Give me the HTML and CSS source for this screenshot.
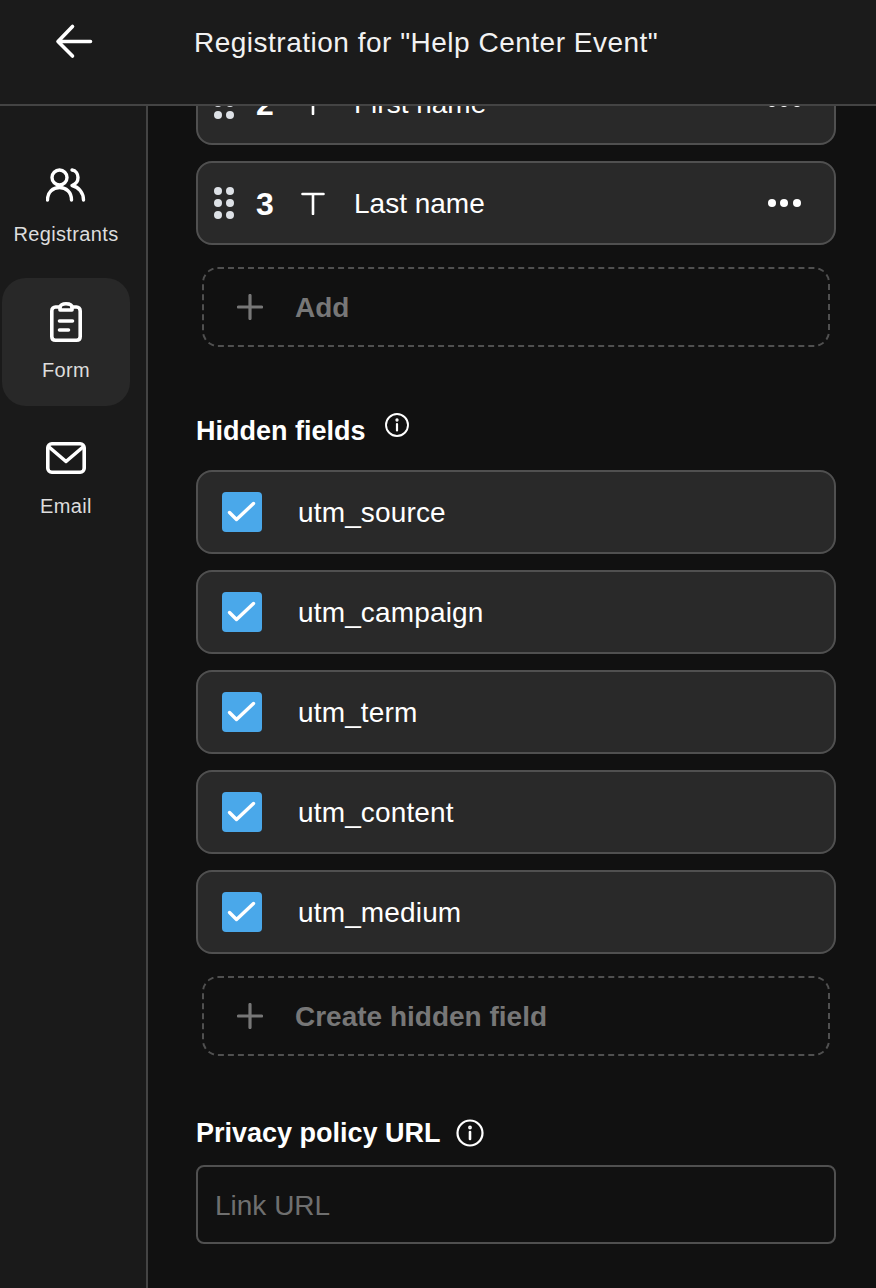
FILE: index.html
```html
<!DOCTYPE html>
<html lang="en">
<head>
<meta charset="utf-8">
<title>Registration</title>
<link rel="stylesheet" href="styles.css">
</head>
<body>
<div class="app">
  <header class="topbar">
    <button class="back" aria-label="Back">
      <svg width="40" height="40" viewBox="0 0 40 40" fill="none" stroke="#fff" stroke-width="3.600" stroke-linecap="round" stroke-linejoin="round"><path d="M4 20.500H36.500M18.500 5.500L4 20.500L18.500 35"/></svg>
    </button>
    <h1 class="title">Registration for "Help Center Event"</h1>
  </header>
  <div class="body">
    <nav class="sidebar">
      <a class="nav-item">
        <svg width="40" height="36" viewBox="0 0 40 36" fill="none" stroke="#fff" stroke-width="3.400" stroke-linecap="round" stroke-linejoin="round"><circle cx="13.500" cy="9.500" r="7.500"/><path d="M1.500 32C1.500 24 7 19.500 13.500 19.500C20 19.500 25.500 24 25.500 32"/><path d="M26 2C30 2.500 32 6 32 9.500C32 13 30 16 26 17.500C33 19 37.500 25 37.500 32"/></svg>
        <span>Registrants</span>
      </a>
      <a class="nav-item active">
        <svg width="32" height="40" viewBox="0 0 32 40" fill="none" stroke="#fff" stroke-width="3.600" stroke-linecap="round" stroke-linejoin="round"><path d="M10 5H5.500C3.500 5 1.800 6.500 1.800 9V34.500C1.800 37 3.500 38.200 5.500 38.200H26.500C28.500 38.200 30.200 37 30.200 34.500V9C30.200 6.500 28.500 5 26.500 5H22"/><path d="M10 8V5.500C10 3 12.500 1.800 16 1.800C19.500 1.800 22 3 22 5.500V8Z"/><path d="M9.500 19H22.500M9.500 28H18.500"/></svg>
        <span>Form</span>
      </a>
      <a class="nav-item">
        <svg width="40" height="32" viewBox="0 0 40 32" fill="none" stroke="#fff" stroke-width="3.600" stroke-linecap="round" stroke-linejoin="round"><rect x="1.800" y="1.800" width="36.400" height="28.400" rx="4"/><path d="M3 5L20 19.500L37 5"/></svg>
        <span>Email</span>
      </a>
    </nav>
    <main class="content">
      <div class="list fields">
        <div class="card field">
          <span class="grip"><i></i><i></i><i></i><i></i><i></i><i></i></span>
          <span class="num">2</span>
          <svg class="type" width="24" height="24" viewBox="0 0 24 24" fill="none" stroke="#fff" stroke-width="2.600" stroke-linecap="round"><path d="M1.500 3H22.500M12 3V23"/></svg>
          <span class="name">First name</span>
          <span class="more"><i></i><i></i><i></i></span>
        </div>
        <div class="card field">
          <span class="grip"><i></i><i></i><i></i><i></i><i></i><i></i></span>
          <span class="num">3</span>
          <svg class="type" width="24" height="24" viewBox="0 0 24 24" fill="none" stroke="#fff" stroke-width="2.600" stroke-linecap="round"><path d="M1.500 3H22.500M12 3V23"/></svg>
          <span class="name">Last name</span>
          <span class="more"><i></i><i></i><i></i></span>
        </div>
      </div>
      <div class="dashed add-first">
        <svg width="26" height="26" viewBox="0 0 26 26" fill="none" stroke="#777" stroke-width="3.200" stroke-linecap="round"><path d="M13 1.500V24.500M1.500 13H24.500"/></svg>
        <span>Add</span>
      </div>
      <div class="heading hidden-heading">
        <span>Hidden fields</span>
        <svg class="info info-up" width="24" height="24" viewBox="0 0 24 24" fill="none" stroke="#fff" stroke-width="1.900" stroke-linecap="round"><circle cx="12" cy="12" r="11"/><path d="M12 11V17.500" stroke-width="2.200"/><circle cx="12" cy="7" r="0.700"/></svg>
      </div>
      <div class="list">
        <label class="card check"><span class="box"><svg width="40" height="40" viewBox="0 0 40 40" fill="none" stroke="#fff" stroke-width="3.400" stroke-linecap="round" stroke-linejoin="round"><path d="M7.500 20.500L14.500 27.500L31.500 11.500"/></svg></span><span class="name">utm_source</span></label>
        <label class="card check"><span class="box"><svg width="40" height="40" viewBox="0 0 40 40" fill="none" stroke="#fff" stroke-width="3.400" stroke-linecap="round" stroke-linejoin="round"><path d="M7.500 20.500L14.500 27.500L31.500 11.500"/></svg></span><span class="name">utm_campaign</span></label>
        <label class="card check"><span class="box"><svg width="40" height="40" viewBox="0 0 40 40" fill="none" stroke="#fff" stroke-width="3.400" stroke-linecap="round" stroke-linejoin="round"><path d="M7.500 20.500L14.500 27.500L31.500 11.500"/></svg></span><span class="name">utm_term</span></label>
        <label class="card check"><span class="box"><svg width="40" height="40" viewBox="0 0 40 40" fill="none" stroke="#fff" stroke-width="3.400" stroke-linecap="round" stroke-linejoin="round"><path d="M7.500 20.500L14.500 27.500L31.500 11.500"/></svg></span><span class="name">utm_content</span></label>
        <label class="card check"><span class="box"><svg width="40" height="40" viewBox="0 0 40 40" fill="none" stroke="#fff" stroke-width="3.400" stroke-linecap="round" stroke-linejoin="round"><path d="M7.500 20.500L14.500 27.500L31.500 11.500"/></svg></span><span class="name">utm_medium</span></label>
      </div>
      <div class="dashed add-hidden">
        <svg width="26" height="26" viewBox="0 0 26 26" fill="none" stroke="#777" stroke-width="3.200" stroke-linecap="round"><path d="M13 1.500V24.500M1.500 13H24.500"/></svg>
        <span>Create hidden field</span>
      </div>
      <div class="heading privacy-heading">
        <span>Privacy policy URL</span>
        <svg class="info" width="28" height="28" viewBox="0 0 28 28" fill="none" stroke="#fff" stroke-width="2.200" stroke-linecap="round"><circle cx="14" cy="14" r="12.500"/><path d="M14 13V20" stroke-width="2.600"/><circle cx="14" cy="8.500" r="0.800"/></svg>
      </div>
      <div class="input">Link URL</div>
    </main>
  </div>
</div>
</body>
</html>
```

FILE: styles.css
```css
* { box-sizing: border-box; }
html, body { margin: 0; height: 100%; background: #111; }
body { font-family: "Liberation Sans", Arial, sans-serif; color: #fff; overflow: hidden; }
.app { height: 1288px; display: flex; flex-direction: column; }

.topbar { flex: none; height: 106px; background: #1b1b1b; border-bottom: 2px solid #444; display: flex; align-items: flex-start; position: relative; z-index: 1; }
.back { width: 54px; height: 40px; margin: 21px 0 0 54px; padding: 0; background: none; border: 0; display: block; }
.back svg { display: block; }
.title { margin: 26px 0 0 86px; font-size: 28px; line-height: 34px; font-weight: 400; letter-spacing: 0.5px; color: #f2f2f2; }

.body { flex: 1; display: flex; min-height: 0; }
.sidebar { flex: none; width: 148px; background: #1a1a1a; border-right: 2px solid #444; padding: 36px 16px 0 2px; display: flex; flex-direction: column; gap: 8px; }
.nav-item { width: 128px; height: 128px; border-radius: 24px; display: flex; flex-direction: column; align-items: center; justify-content: flex-start; padding-top: 24px; color: #ddd; font-size: 20px; line-height: 24px; letter-spacing: 0.35px; }
.nav-item svg { display: block; height: 40px; }
.nav-item span { margin-top: 16px; white-space: nowrap; }
.nav-item.active { background: #282828; }

.content { flex: 1; min-width: 0; padding: 0 40px 0 48px; overflow: hidden; }
.list { display: flex; flex-direction: column; gap: 16px; }
.fields { margin-top: -45px; }
.card { height: 84px; background: #292929; border: 2px solid #505050; border-radius: 16px; display: flex; align-items: center; }
.name { font-size: 28px; line-height: 34px; padding-top: 2px; color: #fff; }

.field { padding: 0 33px 0 16px; }
.grip { width: 20px; height: 32px; display: grid; grid-template-columns: 8px 8px; grid-auto-rows: 8px; gap: 4px; margin-right: 22px; }
.grip i { width: 8px; height: 8px; border-radius: 50%; background: #dde1e6; }
.num { width: 18px; font-size: 32px; line-height: 36px; padding-top: 2px; font-weight: 700; }
.type { margin: 0 29px 0 27px; }
.field .name { flex: 1; }
.more { display: flex; gap: 4.7px; }
.more i { width: 8px; height: 8px; border-radius: 50%; background: #fff; }
.check .name { letter-spacing: 0.15px; }

.dashed { height: 80px; margin: 22px 6px 0; border: 2px dashed #505050; border-radius: 16px; display: flex; align-items: center; padding-left: 33px; color: #777; font-size: 28px; font-weight: 700; }
.dashed span { margin-left: 32px; padding-top: 2px; }
.add-hidden { margin-top: 22px; }

.heading { display: flex; font-size: 27px; line-height: 34px; font-weight: 700; }
.hidden-heading { margin-top: 66px; margin-bottom: 23px; align-items: center; height: 34px; }
.hidden-heading span { padding-top: 2px; }
.hidden-heading .info { margin-left: 19px; position: relative; top: -5px; }
.privacy-heading { margin-top: 60px; margin-bottom: 15px; align-items: center; height: 34px; }
.privacy-heading .info { margin-left: 15px; }

.check { padding-left: 24px; }
.box { width: 40px; height: 40px; border-radius: 4px; background: #4aa8ea; display: block; margin-right: 36px; flex: none; }
.box svg { display: block; }

.input { height: 79px; border: 2px solid #505050; border-radius: 8px; background: #111; padding: 2px 0 0 17px; display: flex; align-items: center; font-size: 28px; color: #6f6f6f; }
```
